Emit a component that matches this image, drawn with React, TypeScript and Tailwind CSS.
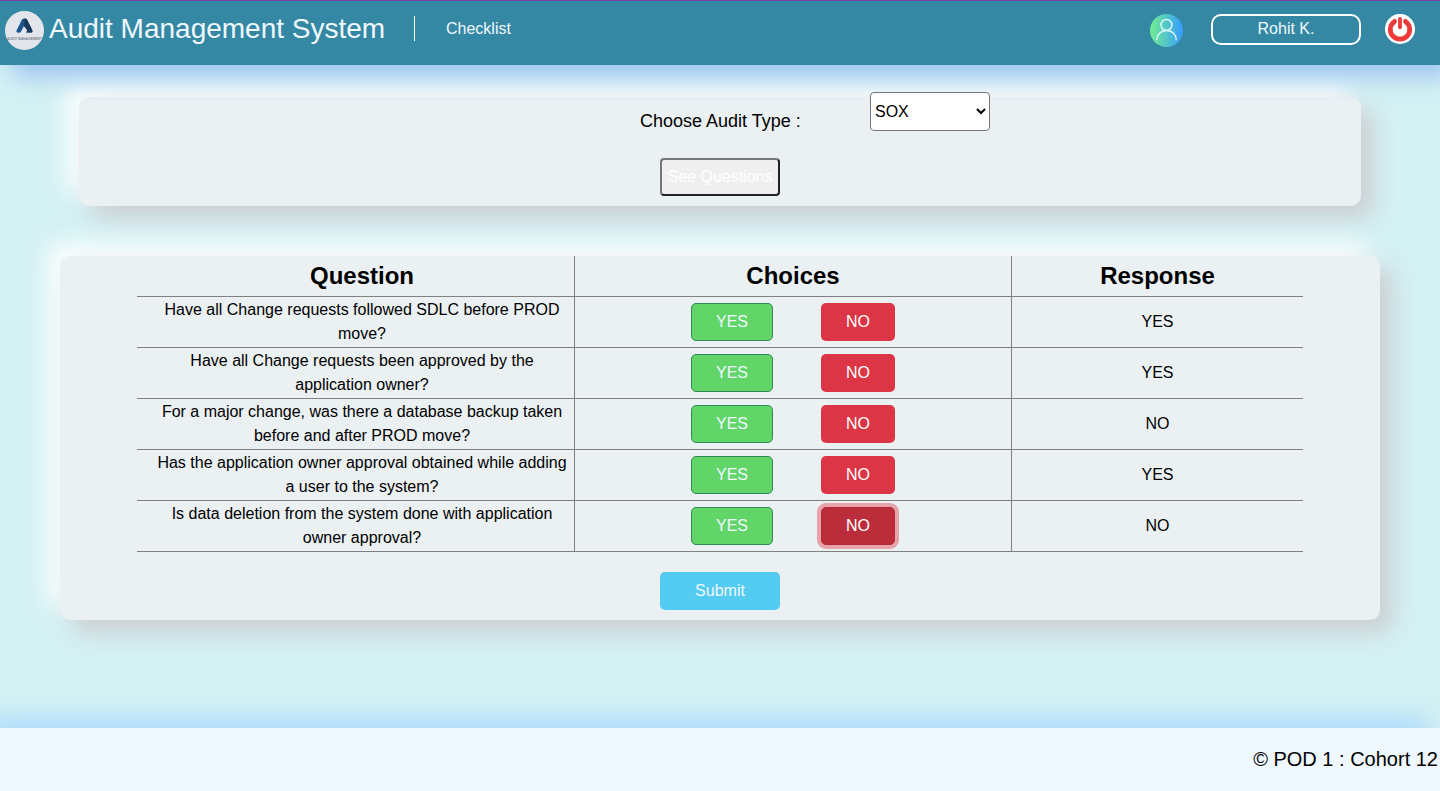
const questions = [
  { lines: ["Have all Change requests followed SDLC before PROD", "move?"], response: "YES" },
  { lines: ["Have all Change requests been approved by the", "application owner?"], response: "YES" },
  { lines: ["For a major change, was there a database backup taken", "before and after PROD move?"], response: "NO" },
  { lines: ["Has the application owner approval obtained while adding", "a user to the system?"], response: "YES" },
  { lines: ["Is data deletion from the system done with application", "owner approval?"], response: "NO", focused: true },
];

function Logo() {
  return (
    <svg className="mt-[11px] ml-[5px] size-[39px] shrink-0 overflow-visible" viewBox="0 0 39 39">
      <circle cx="19.5" cy="19.5" r="19.5" fill="#e2e5ea" />
      <path d="M17 8.600q.7-1.100 2.500-1.100t2.500 1.100L27.300 19.200q.6 2.300-1.600 2.300h-4.400l1-2.300-3.300-4.200-2.800 5.200q-.8 1.500-2.600 1.500-2.700 0-2-2.500Z" fill="#1b5590" />
      <path d="M19.500 7.500q1.800 0 2.500 1.100L27.300 19.200q.6 2.300-1.600 2.300h-4.400l1-2.300-3.300-4.200Z" fill="#19395c" />
      <text x="2" y="28.800" textLength="35" lengthAdjust="spacingAndGlyphs" fontSize="4.200" fontWeight="bold" fill="#7f8792" fontFamily="Liberation Sans, sans-serif">AUDIT MANAGEMENT</text>
    </svg>
  );
}

function Avatar() {
  return (
    <svg className="mt-[14px] size-[33px] shrink-0" viewBox="0 0 33 33" fill="none">
      <defs>
        <linearGradient id="avatar" x1="0" x2="1" y1="0" y2="0">
          <stop offset="0" stopColor="#73ef91" />
          <stop offset="1" stopColor="#359bff" />
        </linearGradient>
      </defs>
      <circle cx="16.5" cy="16.5" r="16.5" fill="url(#avatar)" />
      <circle cx="16.4" cy="11" r="5.500" stroke="#d8f8f8" strokeWidth="1.500" />
      <path d="M6.700 26.300c0-5.500 4.200-9.800 9.800-9.800s9.800 4.300 9.800 9.800" stroke="#d8f8f8" strokeWidth="1.500" />
    </svg>
  );
}

function Power() {
  return (
    <svg className="mt-[14px] ml-6 size-[30px] shrink-0" viewBox="0 0 30 30" fill="none">
      <circle cx="15" cy="15" r="15" fill="#fff" />
      <path d="M9.600 7.400a9.700 9.700 0 1 0 10.800 0" stroke="#ee3a38" strokeWidth="4.800" strokeLinecap="round" />
      <path d="M15 2.800v11" stroke="#fff" strokeWidth="6.200" strokeLinecap="round" />
      <path d="M15 5v8.300" stroke="#ee3a38" strokeWidth="3.800" strokeLinecap="round" />
    </svg>
  );
}

export default function App() {
  return (
    <div className="flex h-[791px] w-[1440px] flex-col overflow-hidden bg-[#d4f1f4] font-['Liberation_Sans',Arial,sans-serif] text-base leading-6 text-black">
      <header className="relative z-10 flex h-[65px] shrink-0 items-start border-t border-[#7440a8] bg-[#3588a3] text-[#f0f8ff] shadow-[12px_12px_24px_#9fc5f1]">
        <div className="-mt-px flex flex-1 items-start">
          <Logo />
          <h1 className="mt-3 ml-[5px] w-[336px] text-[28px] leading-[34px] whitespace-nowrap">Audit Management System</h1>
          <span className="mt-4 ml-[29px] h-[25px] w-px bg-white" />
          <a className="mt-[17px] ml-[31px]">Checklist</a>
        </div>
        <div className="-mt-px flex items-start pr-[25px]">
          <Avatar />
          <div className="mt-[14px] ml-7 h-[31px] w-[150px] rounded-[10px] border-2 border-white text-center leading-[26px]">Rohit K.</div>
          <Power />
        </div>
      </header>

      <main className="flex flex-1 flex-col items-center">
        <section className="mt-8 flex h-[109px] w-[1282px] flex-col items-center rounded-[10px] bg-[#ebf0f3] shadow-[12px_12px_24px_#cbced1,-12px_-12px_24px_#fff]">
          <div className="-mt-[5px] ml-[561px] flex h-[39px] w-[350px] items-start self-start">
            <label className="mt-4 w-[230px] text-lg leading-[26px] whitespace-nowrap">Choose Audit Type :</label>
            <select className="relative z-20 h-[39px] w-[120px] shrink-0 rounded-[4px] border border-[#767676] bg-white">
              <option>SOX</option>
            </select>
          </div>
          <button className="mt-[27px] h-[38px] w-[120px] rounded-[4px] border-2 border-[#767676_#212121_#212121_#767676] bg-[#efefef] pb-px whitespace-nowrap text-white">See Questions</button>
        </section>

        <section className="mt-[50px] flex h-[364px] w-[1320px] flex-col items-center rounded-[10px] bg-[#ebf0f3] shadow-[12px_12px_24px_#cbced1,-12px_-12px_24px_#fff]">
          <table className="w-[1166px] table-fixed border-separate border-spacing-0">
            <colgroup>
              <col className="w-[438px]" />
              <col className="w-[437px]" />
              <col className="w-[291px]" />
            </colgroup>
            <thead>
              <tr className="h-[41px] text-2xl">
                <th className="border-r border-b border-[#808080] p-0 pl-[13px]">Question</th>
                <th className="border-r border-b border-[#808080] p-0">Choices</th>
                <th className="border-b border-[#808080] p-0">Response</th>
              </tr>
            </thead>
            <tbody>
              {questions.map((q) => (
                <tr key={q.lines[0]} className="h-[51px] text-center">
                  <td className="border-r border-b border-[#808080] p-0 pl-[13px] whitespace-nowrap">
                    {q.lines[0]}
                    <br />
                    {q.lines[1]}
                  </td>
                  <td className="border-r border-b border-[#808080] p-0">
                    <div className="flex justify-center gap-12">
                      <button className="h-[38px] w-[82px] rounded-[5px] border border-[#2e8b57] bg-[#62d569] pb-px text-[#f0f8ff]">YES</button>
                      <button
                        className={
                          q.focused
                            ? "h-[38px] w-[74px] rounded-[5px] border border-[#b02a37] bg-[#bb2d3b] pb-px text-white shadow-[0_0_0_4px_#e8a2aa]"
                            : "h-[38px] w-[74px] rounded-[5px] bg-[#dc3545] pb-px text-white"
                        }
                      >
                        NO
                      </button>
                    </div>
                  </td>
                  <td className="border-b border-[#808080] p-0 pb-px">{q.response}</td>
                </tr>
              ))}
            </tbody>
          </table>
          <button className="mt-5 h-[38px] w-[120px] rounded-[5px] bg-[#54cbf1] pb-px text-[#f0f8ff]">Submit</button>
        </section>
      </main>

      <footer className="flex h-[63px] shrink-0 justify-end bg-[#f0f8ff] pt-4 pr-[2px] text-xl leading-[30px] shadow-[-12px_-12px_24px_#b0dcfc]">
        © POD 1 : Cohort 12
      </footer>
    </div>
  );
}
